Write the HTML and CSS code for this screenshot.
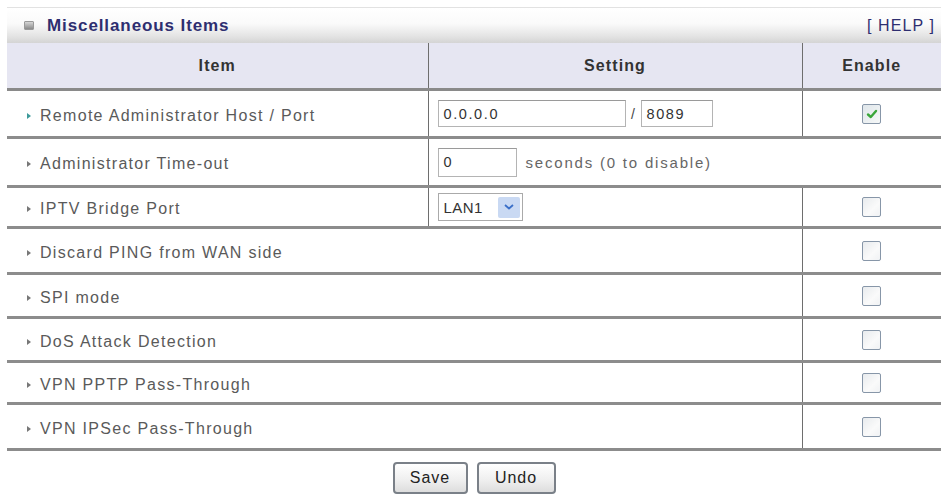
FILE: index.html
```html
<!DOCTYPE html>
<html>
<head>
<meta charset="utf-8">
<link rel="stylesheet" href="styles.css">
</head>
<body>
<div class="panel">
  <div class="titlebar">
    <div class="title"><span class="ticon"></span>Miscellaneous Items</div>
    <div class="help">[ HELP ]</div>
  </div>
  <table class="grid">
    <colgroup><col class="c1"><col class="c2"><col class="c3"></colgroup>
    <thead>
      <tr class="head"><th>Item</th><th>Setting</th><th>Enable</th></tr>
    </thead>
    <tbody>
      <tr class="h41">
        <td class="item"><span class="arr teal"></span>Remote Administrator Host / Port</td>
        <td class="set"><div class="inline"><span class="inp w188">0.0.0.0</span><span class="slash">/</span><span class="inp w72">8089</span></div></td>
        <td class="en"><span class="cb on"><svg viewBox="0 0 14 14" width="14" height="14"><path d="M3 7.5 L5.8 10 L11 4" fill="none" stroke="#3aa63a" stroke-width="2.4" stroke-linecap="round" stroke-linejoin="round"/></svg></span></td>
      </tr>
      <tr class="h42">
        <td class="item"><span class="arr"></span>Administrator Time-out</td>
        <td class="set" colspan="2"><div class="inline"><span class="inp w79 tall">0</span><span class="note">seconds (0 to disable)</span></div></td>
      </tr>
      <tr class="h34">
        <td class="item"><span class="arr"></span>IPTV Bridge Port</td>
        <td class="set"><div class="sel"><span class="selv">LAN1</span><span class="selb"><svg viewBox="0 0 10 6" width="10" height="6"><path d="M1 1 L5 4.5 L9 1" fill="none" stroke="#3a6fc8" stroke-width="1.8"/></svg></span></div></td>
        <td class="en"><span class="cb"></span></td>
      </tr>
      <tr class="h39">
        <td class="item" colspan="2"><span class="arr"></span>Discard PING from WAN side</td>
        <td class="en"><span class="cb"></span></td>
      </tr>
      <tr class="h37">
        <td class="item" colspan="2"><span class="arr"></span>SPI mode</td>
        <td class="en"><span class="cb"></span></td>
      </tr>
      <tr class="h37">
        <td class="item" colspan="2"><span class="arr"></span>DoS Attack Detection</td>
        <td class="en"><span class="cb"></span></td>
      </tr>
      <tr class="h35">
        <td class="item" colspan="2"><span class="arr"></span>VPN PPTP Pass-Through</td>
        <td class="en"><span class="cb"></span></td>
      </tr>
      <tr class="h39">
        <td class="item" colspan="2"><span class="arr"></span>VPN IPSec Pass-Through</td>
        <td class="en"><span class="cb"></span></td>
      </tr>
    </tbody>
  </table>
  <div class="actions">
    <button class="btn save">Save</button>
    <button class="btn undo">Undo</button>
  </div>
</div>
</body>
</html>
```
FILE: styles.css
```css
html, body { margin: 0; padding: 0; background: #fff; }
body { padding: 7px 7px 0 7px; font-family: "Liberation Sans", Arial, sans-serif; color: #555; }
.panel { width: 934px; }
.titlebar {
  height: 36px;
  display: flex; align-items: center; justify-content: space-between;
  border-top: 1px solid #e2e2e2;
  background: linear-gradient(#ffffff 0%, #fafafa 45%, #e4e4e4 80%, #d4d4d4 100%);
  box-sizing: border-box;
  padding: 0 6px 0 17px;
}
.title { display: flex; align-items: center; font-weight: bold; font-size: 17px; color: #2e2e70; letter-spacing: 0.9px; }
.ticon { width: 8px; height: 7px; margin-right: 13px; background: linear-gradient(#d6d6d6, #8a8a8a); border: 1px solid #9a9a9a; border-radius: 1px; }
.help { font-size: 16px; color: #2e2e70; letter-spacing: 1.1px; }
.grid { width: 934px; border-collapse: collapse; table-layout: fixed; }
.c1 { width: 421px; } .c2 { width: 374px; } .c3 { width: 139px; }
.head th {
  height: 45px; padding: 0; background: #e6e6f2;
  font-size: 16px; font-weight: bold; color: #333; letter-spacing: 1.1px;
  border-bottom: 3px solid #8a8a8a;
}
.head th + th { border-left: 1.5px solid #6e6e6e; }
td { padding: 0; border-bottom: 3px solid #8c8c8c; vertical-align: middle; }
td + td { border-left: 1.5px solid #6e6e6e; }
.h42 td { height: 42px; } .h41 td { height: 41px; } .h39 td { height: 39px; }
.h37 td { height: 37px; } .h35 td { height: 35px; } .h34 td { height: 34px; }
.item { font-size: 16px; letter-spacing: 1.3px; color: #5a5a5a; padding-left: 20px; padding-top: 4px; white-space: nowrap; }
.arr { display: inline-block; width: 0; height: 0; border-left: 4px solid #777; border-top: 3.5px solid transparent; border-bottom: 3.5px solid transparent; margin-right: 9px; vertical-align: 2px; }
.arr.teal { border-left-color: #3d9a9a; }
.set { padding-left: 9px; }
.inline { display: flex; align-items: center; }
.inp {
  box-sizing: border-box; height: 27px; border: 1px solid #b4b4b4; border-top-color: #9a9a9a;
  padding: 0 0 0 5px; display: flex; align-items: center; font-size: 14.5px; color: #333; letter-spacing: 1.6px;
}
.inp.tall { height: 29px; }
.w188 { width: 188px; } .w72 { width: 72px; } .w79 { width: 79px; }
.slash { width: 15px; text-align: center; font-size: 14px; color: #444; }
.note { margin-left: 9px; font-size: 15px; letter-spacing: 1.8px; color: #666; }
.sel {
  box-sizing: border-box; width: 85px; height: 28px; border: 1px solid #aaa;
  display: flex; align-items: center; justify-content: space-between; padding: 2px;
}
.selv { font-size: 15px; color: #333; padding-left: 3px; letter-spacing: 0.4px; }
.selb { width: 22px; height: 21px; background: #c9d9f3; display: flex; align-items: center; justify-content: center; border-radius: 2px; }
.en { text-align: center; }
.cb {
  display: inline-flex; align-items: center; justify-content: center; box-sizing: border-box;
  width: 19px; height: 20px; border: 1.5px solid #8796a8; border-radius: 2px;
  background: linear-gradient(135deg, #e8ebee, #fafafa 60%, #f0f2f4); vertical-align: middle;
}
.cb.on { background: linear-gradient(135deg, #dfe6ea, #f6f8f8); }
.actions { display: flex; justify-content: center; gap: 9px; padding-top: 11px; }
.btn {
  height: 32px; padding: 0; font-family: "Liberation Sans", Arial, sans-serif; font-size: 16px; color: #222;
  border: 2px solid #7a8088; border-radius: 4px; background: linear-gradient(#ffffff, #eeeeee 60%, #dddddd);
  letter-spacing: 1px;
}
.save { width: 75px; } .undo { width: 79px; }
```
